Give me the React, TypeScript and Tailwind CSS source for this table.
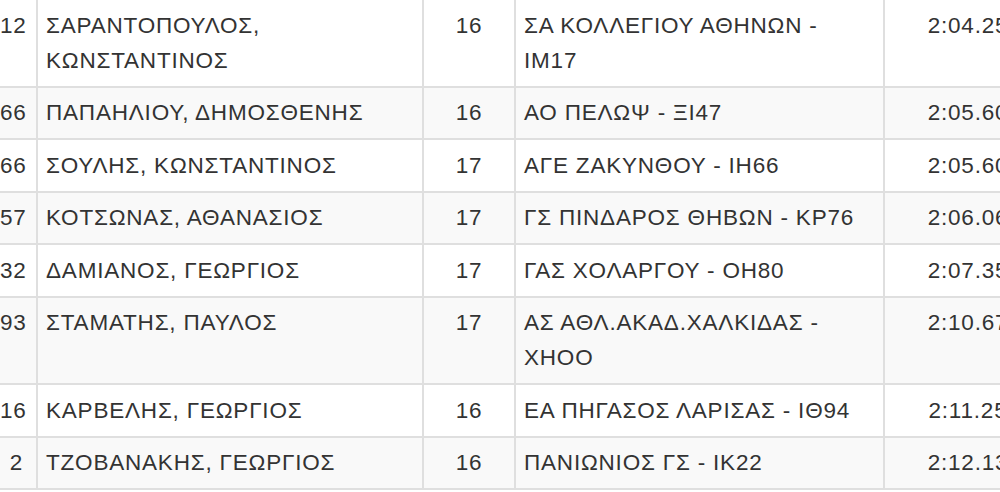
import React from "react";

type Row = { n: string; name: string[]; age: string; club: string[]; time: string };

const rows: Row[] = [
  { n: "12", name: ["ΣΑΡΑΝΤΟΠΟΥΛΟΣ,", "ΚΩΝΣΤΑΝΤΙΝΟΣ"], age: "16", club: ["ΣΑ ΚΟΛΛΕΓΙΟΥ ΑΘΗΝΩΝ -", "ΙΜ17"], time: "2:04.25" },
  { n: "66", name: ["ΠΑΠΑΗΛΙΟΥ, ΔΗΜΟΣΘΕΝΗΣ"], age: "16", club: ["ΑΟ ΠΕΛΩΨ - ΞΙ47"], time: "2:05.60" },
  { n: "66", name: ["ΣΟΥΛΗΣ, ΚΩΝΣΤΑΝΤΙΝΟΣ"], age: "17", club: ["ΑΓΕ ΖΑΚΥΝΘΟΥ - ΙΗ66"], time: "2:05.60" },
  { n: "57", name: ["ΚΟΤΣΩΝΑΣ, ΑΘΑΝΑΣΙΟΣ"], age: "17", club: ["ΓΣ ΠΙΝΔΑΡΟΣ ΘΗΒΩΝ - ΚΡ76"], time: "2:06.06" },
  { n: "32", name: ["ΔΑΜΙΑΝΟΣ, ΓΕΩΡΓΙΟΣ"], age: "17", club: ["ΓΑΣ ΧΟΛΑΡΓΟΥ - ΟΗ80"], time: "2:07.35" },
  { n: "93", name: ["ΣΤΑΜΑΤΗΣ, ΠΑΥΛΟΣ"], age: "17", club: ["ΑΣ ΑΘΛ.ΑΚΑΔ.ΧΑΛΚΙΔΑΣ -", "ΧΗΟΟ"], time: "2:10.67" },
  { n: "16", name: ["ΚΑΡΒΕΛΗΣ, ΓΕΩΡΓΙΟΣ"], age: "16", club: ["ΕΑ ΠΗΓΑΣΟΣ ΛΑΡΙΣΑΣ - ΙΘ94"], time: "2:11.25" },
  { n: "2", name: ["ΤΖΟΒΑΝΑΚΗΣ, ΓΕΩΡΓΙΟΣ"], age: "16", club: ["ΠΑΝΙΩΝΙΟΣ ΓΣ - ΙΚ22"], time: "2:12.13" },
];

function Lines({ lines }: { lines: string[] }) {
  return (
    <>
      {lines.map((l, i) => (
        <React.Fragment key={i}>
          {i > 0 && <br />}
          {l}
        </React.Fragment>
      ))}
    </>
  );
}

export default function App() {
  return (
    <div
      className="w-[1000px] h-[492px] overflow-hidden bg-white text-[#333] text-[22.5px] leading-[35px] tracking-[0.8px]"
      style={{ fontFamily: '"Liberation Sans", Arial, sans-serif' }}
    >
      <div className="w-[1100px]">
        {rows.map((r, i) => (
          <div
            key={i}
            className={
              "flex border-b-2 border-[#dfdfdf] whitespace-nowrap " +
              (i % 2 === 1 ? "bg-[#f9f9f9]" : "bg-white")
            }
          >
            <div className="w-[38px] shrink-0 border-r-2 border-[#dfdfdf] pt-[7.5px] pb-[8px] pr-[13px] text-right">
              {r.n}
            </div>
            <div className="w-[386px] shrink-0 border-r-2 border-[#dfdfdf] pt-[7.5px] pb-[8px] px-[8px]">
              <Lines lines={r.name} />
            </div>
            <div className="w-[92px] shrink-0 border-r-2 border-[#dfdfdf] pt-[7.5px] pb-[8px] text-center">
              {r.age}
            </div>
            <div className="w-[369px] shrink-0 border-r-2 border-[#dfdfdf] pt-[7.5px] pb-[8px] px-[8px]">
              <Lines lines={r.club} />
            </div>
            <div className="w-[166px] shrink-0 pt-[7.5px] pb-[8px] text-center">{r.time}</div>
          </div>
        ))}
      </div>
    </div>
  );
}
